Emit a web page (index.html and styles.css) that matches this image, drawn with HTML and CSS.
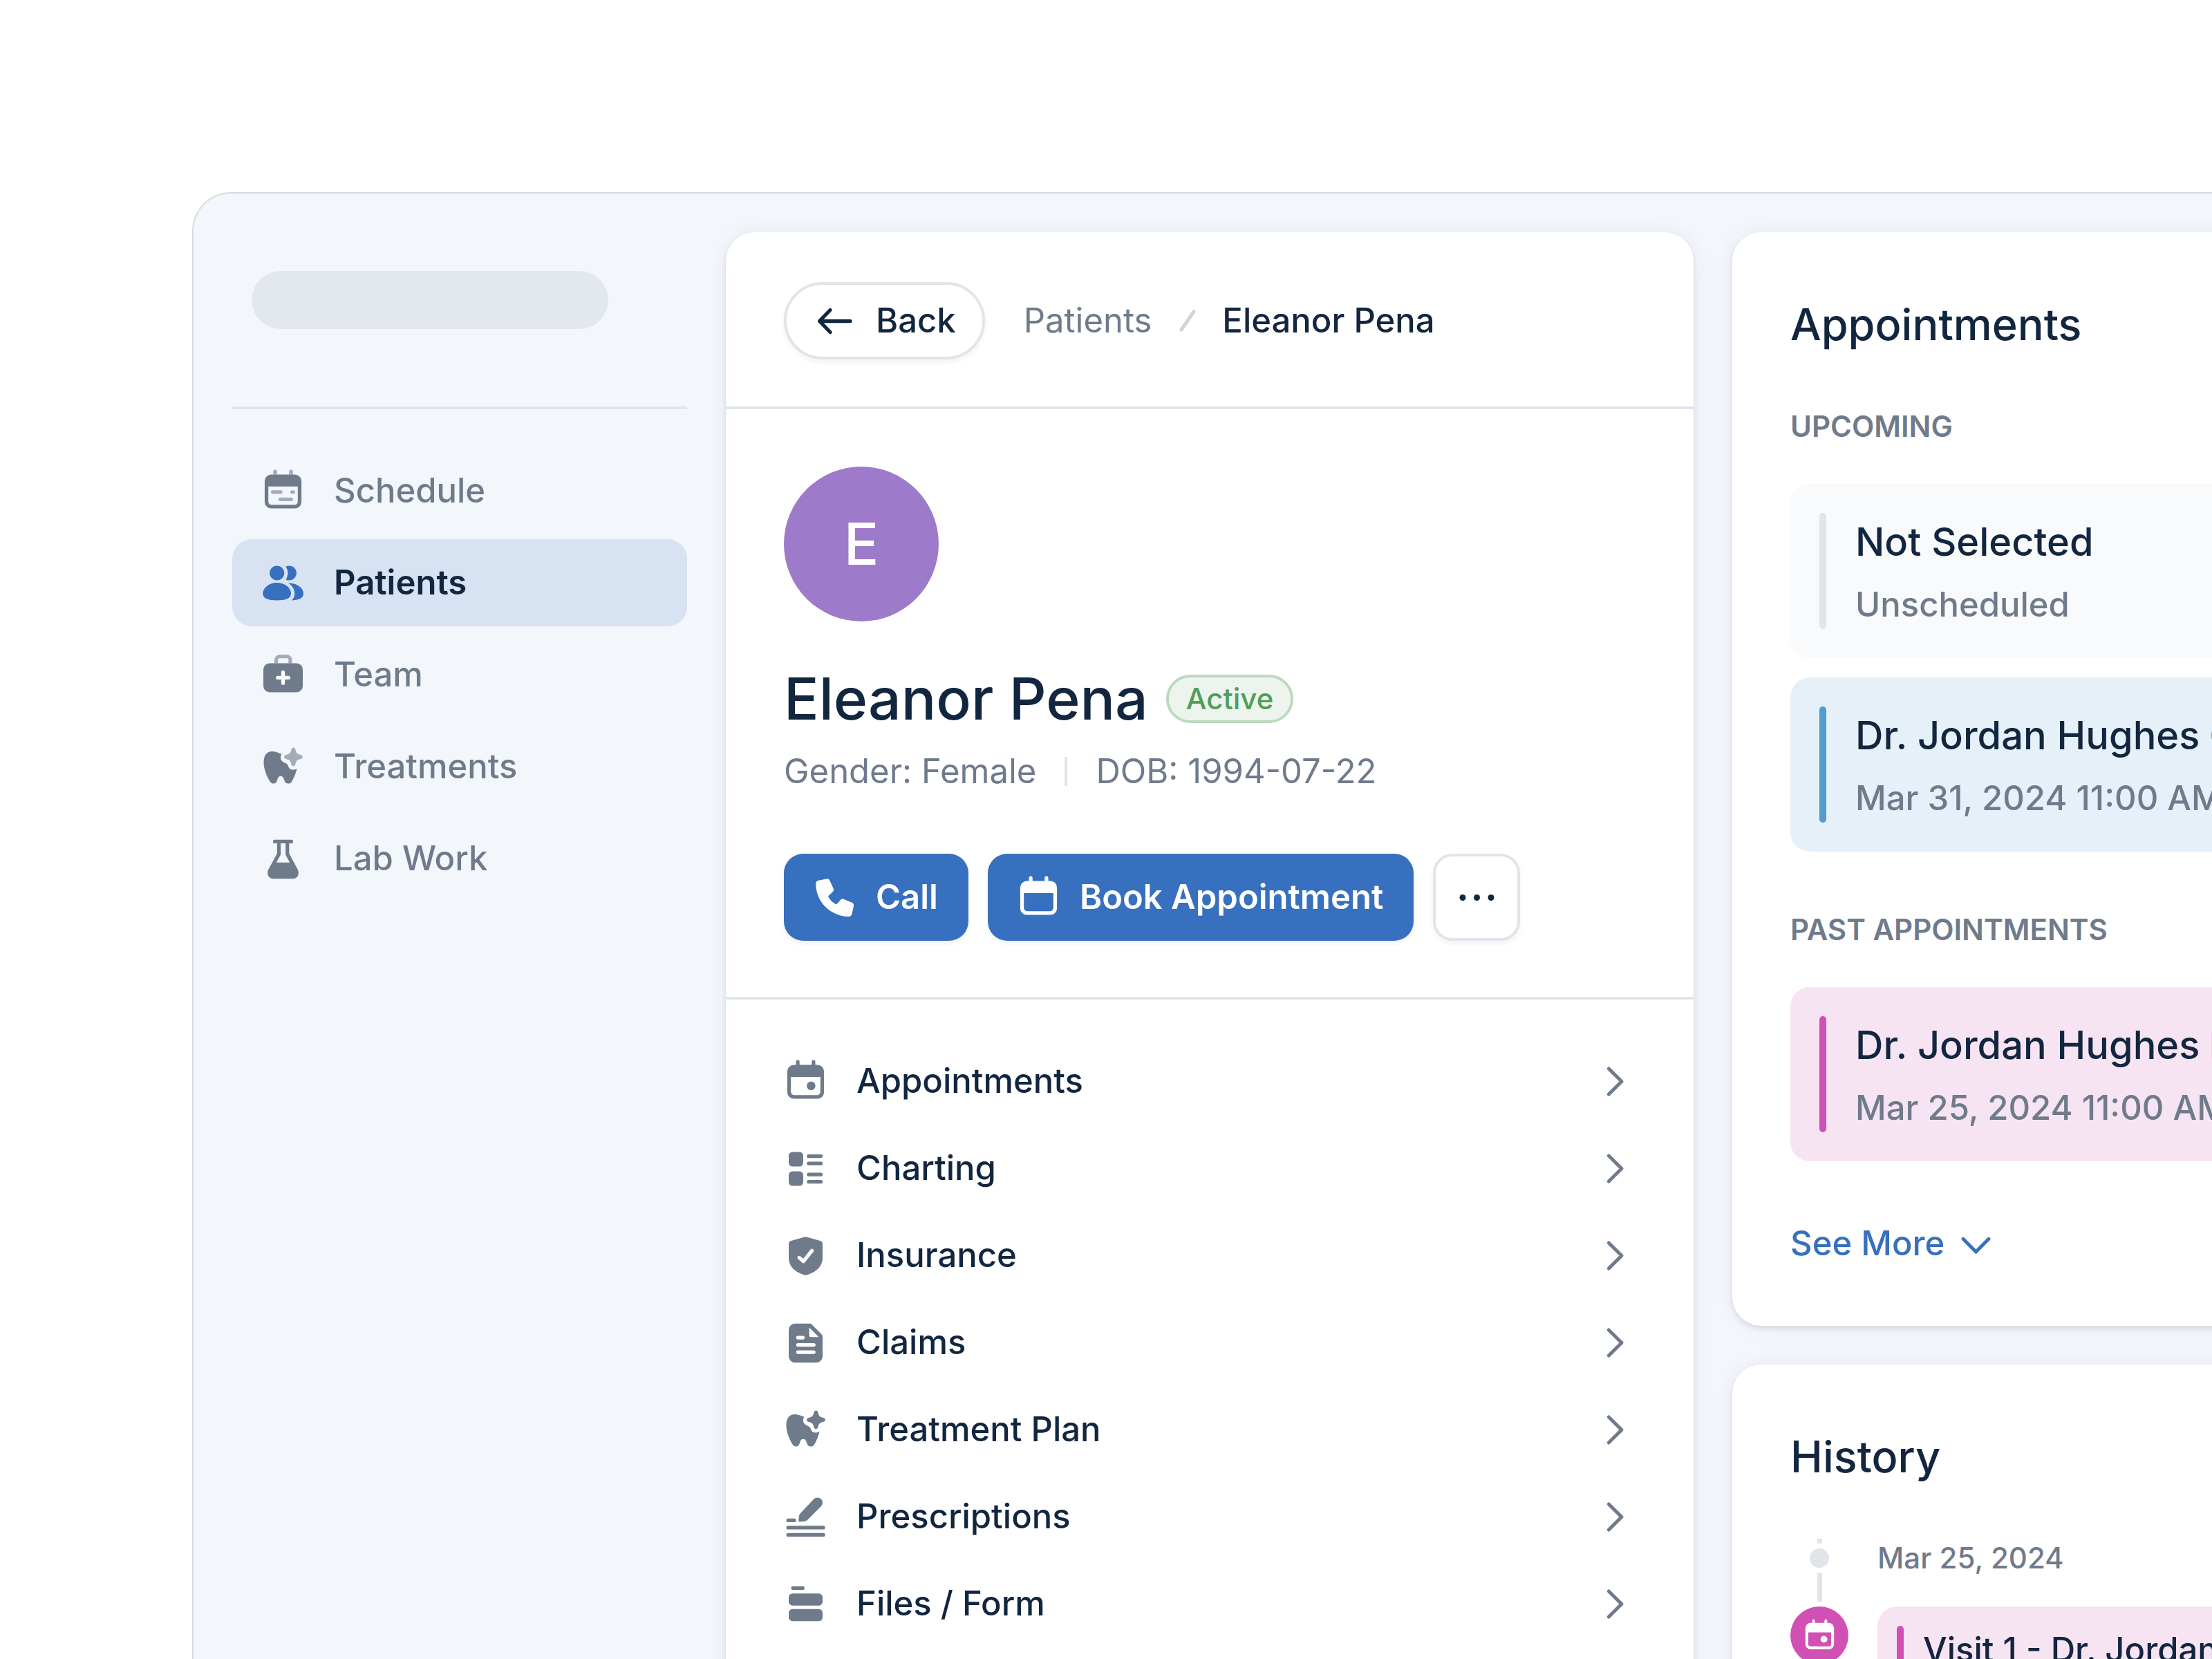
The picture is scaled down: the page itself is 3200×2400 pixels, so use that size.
FILE: index.html
```html
<!DOCTYPE html>
<html lang="en">
<head>
<meta charset="utf-8">
<title>Eleanor Pena – Patients</title>
<link rel="stylesheet" href="styles.css">
</head>
<body>
<svg class="sprite" aria-hidden="true">
  <symbol id="i-calendar" viewBox="0 0 63 63">
    <path d="M14.5 7.5h3V3.2a2.6 2.6 0 0 1 5.2 0v4.3h17.6V3.2a2.6 2.6 0 0 1 5.2 0v4.3h3a9.6 9.6 0 0 1 9.6 9.6v29.8a9.6 9.6 0 0 1-9.6 9.6h-34a9.6 9.6 0 0 1-9.6-9.6V17.100a9.600 9.600 0 0 1 9.600-9.600zM10.200 25v21.600a4.600 4.600 0 0 0 4.600 4.600h33.400a4.600 4.600 0 0 0 4.600-4.600V25z"/>
  </symbol>
  <symbol id="i-calendar-dot" viewBox="0 0 63 63">
    <use href="#i-calendar"/><circle cx="39.400" cy="37.800" r="6.300"/>
  </symbol>
  <symbol id="i-tooth" viewBox="0 0 63 63">
    <path d="M29.400 12.800C25 11.500 22 9 16 8.900C8 8.900 3.500 14.500 3.500 24.500C3.500 35 8 45 12.200 52C13.600 54.500 15.500 55.600 17.600 55.600C20 55.600 21.600 54.400 22.700 51.500C23.800 48 24.600 44.800 28 44.800C31.400 44.800 32.400 48 33.500 51.500C34.600 54.400 36.600 55.600 38.900 55.600C41.200 55.600 43 54.600 44.500 52C47.500 46.500 50 40.500 51.600 34C49.500 35.200 47.500 35.500 45.300 35.500C42.500 35.500 40.500 34 39.400 31.500C38.500 28.500 37.400 26.800 35 26C30.500 24.400 28 22 28 17.800C28 15.800 28.400 14.200 29.400 12.800z"/>
    <path class="soft" d="M46.400 3.600C48 3.600 49 5 49.400 6.500C50.700 11.500 51.800 12.800 56.800 14C58.600 14.400 59.800 15.500 59.800 17C59.800 18.500 58.600 19.600 56.800 20C51.800 21.200 50.700 22.600 49.400 27.300C49 29 48 30.400 46.400 30.400C44.800 30.400 43.900 29 43.400 27.300C42.100 22.600 41 21.200 36 20C34.200 19.600 33 18.500 33 17C33 15.500 34.200 14.400 36 14C41 12.800 42.100 11.500 43.400 6.500C43.900 5 44.800 3.600 46.400 3.600z"/>
  </symbol>
  <symbol id="i-next" viewBox="0 0 63 63">
    <path class="line" d="M24.300 13L43 31.500L24.300 50"/>
  </symbol>
</svg>

<div class="app">
  <aside class="sidebar">
    <div class="brand"><div class="brand-placeholder"></div></div>
    <nav class="nav" aria-label="Main">
      <a class="nav-item" href="#schedule">
        <svg class="icon" viewBox="0 0 63 63" aria-hidden="true">
          <path class="soft" d="M17.200 7.500V3.200a2.800 2.800 0 0 1 5.600 0v4.300zM40.200 7.500V3.200a2.800 2.800 0 0 1 5.600 0v4.300z"/>
          <path d="M14.500 7.400h34a9.600 9.600 0 0 1 9.600 9.600v30a9.600 9.600 0 0 1-9.600 9.600h-34a9.600 9.600 0 0 1-9.600-9.600v-30a9.600 9.600 0 0 1 9.600-9.600zM10.200 24.700v22a4.600 4.600 0 0 0 4.600 4.600h33.400a4.600 4.600 0 0 0 4.600-4.600v-22z"/>
          <path class="soft-line" d="M16.600 32.800h11.500M44.600 32.800h1.800M27.400 43.300h16"/>
        </svg>
        <span>Schedule</span>
      </a>
      <a class="nav-item is-active" href="#patients" aria-current="page">
        <svg class="icon" viewBox="0 0 63 63" aria-hidden="true">
          <circle cx="22.700" cy="17" r="10.600"/>
          <path d="M22.700 31C34 31 43 38.500 43 46.600C43 54 35 56.600 22.700 56.600C10 56.600 2.200 54 2.200 46.600C2.200 38.500 11.500 31 22.700 31z"/>
          <path d="M35.400 7.400C37 6.700 38.700 6.400 40.400 6.400A10.600 10.600 0 0 1 40.400 27.600C38.700 27.600 37.100 27.200 35.600 26.400A17 17 0 0 0 35.400 7.400z"/>
          <path d="M39.300 31.500C51.500 31.500 61 38.500 61 46.600C61 54 53.500 56.300 44 56.400C47 54 48.200 50.500 48.200 46.600C48.200 41 45 35.200 39.300 31.500z"/>
        </svg>
        <span>Patients</span>
      </a>
      <a class="nav-item" href="#team">
        <svg class="icon" viewBox="0 0 63 63" aria-hidden="true">
          <path class="soft" d="M19 14.500V10a8 8 0 0 1 8-8h9.500a8 8 0 0 1 8 8v4.500h-5.200V9a1.800 1.800 0 0 0-1.800-1.800H26a1.800 1.800 0 0 0-1.800 1.800v5.500z"/>
          <rect x="3" y="14.500" width="57" height="42" rx="9"/>
          <path class="cut" d="M23.700 35.400h15.600M31.500 27.600v15.600"/>
        </svg>
        <span>Team</span>
      </a>
      <a class="nav-item" href="#treatments">
        <svg class="icon two-tone" viewBox="0 0 63 63" aria-hidden="true"><use href="#i-tooth"/></svg>
        <span>Treatments</span>
      </a>
      <a class="nav-item" href="#lab">
        <svg class="icon" viewBox="0 0 63 63" aria-hidden="true">
          <path d="M19.500 3.800h24a2.600 2.600 0 0 1 0 5.200h-3.200v14.800L52.500 46.500C56 53.500 52.500 60.200 45.500 60.200H17.500C10.500 60.200 7 53.500 10.500 46.500L22.900 23.800V9h-3.400a2.600 2.600 0 0 1 0-5.200zM28 9v15.500a4 4 0 0 1-.6 2L21.800 36.800h19.400L35.600 26.500a4 4 0 0 1-.5-2V9z"/>
        </svg>
        <span>Lab Work</span>
      </a>
    </nav>
  </aside>

  <main class="card patient">
    <header class="patient-bar">
      <button class="back" type="button">
        <svg class="icon" viewBox="0 0 63 63" aria-hidden="true"><path class="bold-line" d="M54 31.500H10M25 15.500L9.500 31.500L25 47.500"/></svg>
        <span>Back</span>
      </button>
      <nav class="crumbs" aria-label="Breadcrumb">
        <a class="crumb" href="#patients">Patients</a>
        <svg class="slash" viewBox="0 0 46 46" aria-hidden="true"><path d="M15 36L33 10"/></svg>
        <span class="crumb is-current" aria-current="page">Eleanor Pena</span>
      </nav>
    </header>

    <section class="profile">
      <div class="avatar" aria-hidden="true">E</div>
      <div class="name-row">
        <h1 class="name">Eleanor Pena</h1>
        <span class="badge">Active</span>
      </div>
      <div class="meta">
        <span>Gender: Female</span>
        <span class="meta-rule"></span>
        <span>DOB: 1994-07-22</span>
      </div>
      <div class="actions">
        <button class="btn btn-primary" type="button">
          <svg class="icon" viewBox="0 0 63 63" aria-hidden="true"><path d="M19.500 4.500C21.600 4 23.600 5 24.400 7L29.800 18.800C30.400 20.300 30 22 28.700 23.200L22 29.500C24.500 35 28.500 39 34 41.500L40 34.800C41.200 33.400 43 33 44.600 33.700L56.500 38.800C58.500 39.600 59.400 41.600 59 43.700L56.500 55C56 57.400 54.200 59 51.800 59C25.500 58.500 4.500 38 4.200 11.500C4.200 9 5.700 7.200 8 6.700z"/></svg>
          <span>Call</span>
        </button>
        <button class="btn btn-primary" type="button">
          <svg class="icon" viewBox="0 0 63 63" aria-hidden="true"><use href="#i-calendar"/></svg>
          <span>Book Appointment</span>
        </button>
        <button class="btn btn-more" type="button" aria-label="More actions">
          <svg class="icon" viewBox="0 0 63 63" aria-hidden="true"><circle cx="11" cy="31.500" r="4.500"/><circle cx="31.500" cy="31.500" r="4.500"/><circle cx="52" cy="31.500" r="4.500"/></svg>
        </button>
      </div>
    </section>

    <nav class="menu" aria-label="Patient record">
      <a class="menu-item" href="#appointments">
        <svg class="icon" viewBox="0 0 63 63" aria-hidden="true"><use href="#i-calendar-dot"/></svg>
        <span class="menu-label">Appointments</span>
        <svg class="icon" viewBox="0 0 63 63" aria-hidden="true"><use href="#i-next"/></svg>
      </a>
      <a class="menu-item" href="#charting">
        <svg class="icon" viewBox="0 0 63 63" aria-hidden="true">
          <rect x="7" y="7.500" width="21" height="21" rx="5.500"/><rect x="7" y="35.500" width="21" height="21" rx="5.500"/>
          <path class="bar" d="M35.800 13.500h17.800M35.800 24h17.800M35.800 40h17.800M35.800 50.500h17.800"/>
        </svg>
        <span class="menu-label">Charting</span>
        <svg class="icon" viewBox="0 0 63 63" aria-hidden="true"><use href="#i-next"/></svg>
      </a>
      <a class="menu-item" href="#insurance">
        <svg class="icon" viewBox="0 0 63 63" aria-hidden="true">
          <path d="M30 4.400a4.500 4.500 0 0 1 3 0L52.500 10C54.800 10.700 56 12.300 56 14.500V34C56 48 46 55.500 33 59.500a5 5 0 0 1-3 0C17 55.500 7 48 7 34V14.500C7 12.300 8.200 10.700 10.500 10z"/>
          <path class="cut" d="M22.300 34.500L28.300 39.700L40.600 24.300"/>
        </svg>
        <span class="menu-label">Insurance</span>
        <svg class="icon" viewBox="0 0 63 63" aria-hidden="true"><use href="#i-next"/></svg>
      </a>
      <a class="menu-item" href="#claims">
        <svg class="icon" viewBox="0 0 63 63" aria-hidden="true">
          <path d="M16 3.800H37.200a4.500 4.500 0 0 1 3.200 1.300L54.700 19.400A4.500 4.500 0 0 1 56 22.600V51a9.200 9.200 0 0 1-9.200 9.200H16A9.200 9.200 0 0 1 7 51V13A9.200 9.200 0 0 1 16 3.800zM36.700 9.600V20.800a2.500 2.500 0 0 0 2.500 2.500H50.400z"/>
          <path class="cut" d="M20.400 24h7M20.400 34.500h22.800M20.400 45h22.800"/>
        </svg>
        <span class="menu-label">Claims</span>
        <svg class="icon" viewBox="0 0 63 63" aria-hidden="true"><use href="#i-next"/></svg>
      </a>
      <a class="menu-item" href="#treatment-plan">
        <svg class="icon" viewBox="0 0 63 63" aria-hidden="true"><use href="#i-tooth"/></svg>
        <span class="menu-label">Treatment Plan</span>
        <svg class="icon" viewBox="0 0 63 63" aria-hidden="true"><use href="#i-next"/></svg>
      </a>
      <a class="menu-item" href="#prescriptions">
        <svg class="icon" viewBox="0 0 63 63" aria-hidden="true">
          <path d="M23.600 26.500L43 6C47 2 52 3.500 54 5.800C56.500 8.600 56.800 13 53.600 16.300L34.500 35.500C33 37 31 37.700 29 37.900L23 38.400C21.600 38.500 21.200 37.800 21.200 36.800L21.900 30.500C22.100 29 22.600 27.600 23.600 26.500z"/>
          <path class="bar" d="M6.200 36.400h8.800M6.200 46.900h50.800M6.200 57.400h50.800"/>
        </svg>
        <span class="menu-label">Prescriptions</span>
        <svg class="icon" viewBox="0 0 63 63" aria-hidden="true"><use href="#i-next"/></svg>
      </a>
      <a class="menu-item" href="#files">
        <svg class="icon" viewBox="0 0 63 63" aria-hidden="true">
          <path class="bar" d="M13.200 8.400h14"/>
          <rect x="7" y="16.200" width="49" height="17.500" rx="5.500"/><rect x="7" y="38.700" width="49" height="17.500" rx="5.500"/>
        </svg>
        <span class="menu-label">Files / Form</span>
        <svg class="icon" viewBox="0 0 63 63" aria-hidden="true"><use href="#i-next"/></svg>
      </a>
    </nav>
  </main>

  <div class="rail">
    <section class="card panel">
      <h2 class="panel-title">Appointments</h2>
      <h3 class="label label-first">UPCOMING</h3>
      <div class="visits">
        <article class="visit visit-empty">
          <div class="visit-text"><p class="visit-title">Not Selected</p><p class="visit-sub">Unscheduled</p></div>
        </article>
        <article class="visit visit-blue">
          <div class="visit-text">
            <p class="visit-title">Dr. Jordan Hughes <span class="marker marker-round"></span></p>
            <p class="visit-sub">Mar 31, 2024 11:00 AM</p>
          </div>
        </article>
      </div>
      <h3 class="label">PAST APPOINTMENTS</h3>
      <div class="visits">
        <article class="visit visit-pink">
          <div class="visit-text">
            <p class="visit-title">Dr. Jordan Hughes <span class="marker marker-square"></span></p>
            <p class="visit-sub">Mar 25, 2024 11:00 AM</p>
          </div>
        </article>
      </div>
      <a class="see-more" href="#more">
        <span>See More</span>
        <svg class="icon" viewBox="0 0 63 63" aria-hidden="true"><path class="line" d="M13 24.300L31.500 43L50 24.300"/></svg>
      </a>
    </section>

    <section class="card panel">
      <h2 class="panel-title">History</h2>
      <ol class="timeline">
        <li class="event">
          <div class="track"><span class="tick"></span><span class="node"></span><span class="rule"></span></div>
          <time class="event-date" datetime="2024-03-25">Mar 25, 2024</time>
        </li>
        <li class="event">
          <div class="track"><span class="pin"><svg class="pin-icon" viewBox="0 0 63 63" aria-hidden="true"><use href="#i-calendar-dot"/></svg></span></div>
          <div class="note">Visit 1 - Dr. Jordan Hughes</div>
        </li>
      </ol>
    </section>
  </div>
</div>
</body>
</html>
```
FILE: styles.css
```css
:root {
  --ink: #12263f;
  --muted: #6f7b8b;
  --line: #e1e5ea;
  --canvas: #f3f6fb;
  --blue: #3770be;
}

* { box-sizing: border-box; }

html { background: #fff; overflow: hidden; }

body {
  margin: 0;
  padding: 278px 0 0 278px;
  height: 100vh;
  overflow: hidden;
  color: var(--ink);
  font-family: Inter, "Liberation Sans", sans-serif;
  font-size: 49px;
  line-height: 70px;
  font-weight: 500;
  white-space: nowrap;
}

h1, h2, h3, p, ol { margin: 0; padding: 0; font-weight: inherit; font-size: inherit; }
ol { list-style: none; }
a { color: inherit; text-decoration: none; }
button { font: inherit; color: inherit; cursor: pointer; }

.sprite { position: absolute; width: 0; height: 0; }
.icon { flex: none; width: 63px; height: 63px; fill: currentColor; fill-rule: evenodd; }
.line, .bold-line, .bar, .soft-line, .cut {
  fill: none;
  stroke: currentColor;
  stroke-width: 5.25px;
  stroke-linecap: round;
  stroke-linejoin: round;
}
.line { stroke-width: 5px; }
.cut { stroke: #fff; }
.two-tone { --tone: 0.6; }
.soft { opacity: var(--tone, 1); }
.nav-item .soft, .soft-line { opacity: 0.6; }

.app {
  display: flex;
  align-items: flex-start;
  gap: 56px;
  min-height: 100vh;
  padding: 56px;
  border: 2px solid #d9dbde;
  border-right: 0;
  border-radius: 56px 0 0 0;
  background: var(--canvas);
}

.card {
  border-radius: 42px;
  background: #fff;
  box-shadow: 0 4px 7px rgba(18, 38, 63, 0.1), 0 0 28px rgba(18, 38, 63, 0.06);
}

/* Sidebar */
.sidebar { flex: none; width: 658px; }
.brand { padding: 56px 28px 112px; border-bottom: 4px solid var(--line); }
.brand-placeholder { width: 516px; height: 84px; border-radius: 42px; background: #e3e8ef; }
.nav { display: flex; flex-direction: column; gap: 7px; padding-top: 55px; }
.nav-item {
  display: flex;
  align-items: center;
  gap: 42px;
  height: 126px;
  padding: 0 42px;
  border-radius: 28px;
  color: var(--muted);
}
.nav-item.is-active { background: #d7e3f3; color: var(--ink); font-weight: 600; }
.nav-item.is-active .icon { color: var(--blue); }

/* Patient column */
.patient { flex: none; width: 1400px; padding-bottom: 56px; }
.patient-bar {
  display: flex;
  align-items: center;
  gap: 56px;
  padding: 72px 84px 68px;
  border-bottom: 4px solid var(--line);
}
.back {
  display: flex;
  align-items: center;
  gap: 28px;
  height: 112px;
  padding: 0 38px;
  border: 4px solid var(--line);
  border-radius: 56px;
  background: #fff;
  box-shadow: 0 4px 7px rgba(18, 38, 63, 0.06);
}
.crumbs { display: flex; align-items: center; gap: 28px; }
.crumb { color: var(--muted); font-weight: 400; }
.crumb.is-current { color: var(--ink); font-weight: 500; }
.slash { width: 46px; height: 46px; fill: none; stroke: #cfd3d9; stroke-width: 5px; stroke-linecap: round; }

.profile { padding: 83px 84px 81px; border-bottom: 4px solid var(--line); }
.avatar {
  display: grid;
  place-items: center;
  width: 224px;
  height: 224px;
  border-radius: 50%;
  background: #9e7bca;
  color: #fff;
  font-size: 84px;
}
.name-row { display: flex; align-items: center; gap: 26px; margin-top: 56px; }
.name { font-size: 84px; line-height: 112px; }
.badge {
  height: 70px;
  padding: 0 25px;
  border: 4px solid #badbbd;
  border-radius: 35px;
  background: #edf4ee;
  color: #4f9f58;
  font-size: 42px;
  line-height: 62px;
}
.meta { display: flex; align-items: center; gap: 41px; margin-top: 14px; color: var(--muted); font-weight: 400; }
.meta-rule { width: 4px; height: 42px; background: var(--line); }
.actions { display: flex; gap: 28px; margin-top: 84px; }
.btn {
  display: flex;
  align-items: center;
  justify-content: center;
  gap: 28px;
  height: 126px;
  padding: 0 44px 0 42px;
  border: 0;
  border-radius: 28px;
  box-shadow: 0 4px 7px rgba(18, 38, 63, 0.06);
}
.btn-primary { background: var(--blue); color: #fff; font-weight: 600; }
.btn-more { width: 126px; padding: 0; border: 4px solid var(--line); background: #fff; }

.menu { padding: 55px 84px; }
.menu-item { display: flex; align-items: center; gap: 42px; height: 126px; }
.menu-item .icon { color: var(--muted); }
.menu-label { flex: 1; }

/* Right rail */
.rail { display: flex; flex: 1 0 1400px; flex-direction: column; gap: 56px; }
.panel { padding: 84px; }
.panel-title { font-size: 63px; line-height: 98px; }
.label { margin: 85px 0 55px; color: var(--muted); font-size: 42px; line-height: 56px; font-weight: 600; }
.label-first { margin-top: 71px; }
.visits { display: flex; flex-direction: column; gap: 28px; }
.visit { display: flex; gap: 42px; padding: 42px; border-radius: 28px; }
.visit::before { content: ""; width: 10px; border-radius: 5px; background: var(--accent); }
.visit-empty { --accent: #e1e4e9; background: #f8fafc; }
.visit-blue { --accent: #549bcf; background: #e5f0f9; }
.visit-pink { --accent: #d051b3; background: #f7e4f3; }
.visit-title { display: flex; align-items: center; gap: 17px; font-size: 56px; line-height: 84px; }
.visit-sub { margin-top: 14px; color: var(--muted); }
.marker { width: 42px; height: 42px; }
.marker-round { border-radius: 50%; background: #549bcf; }
.marker-square { border-radius: 4px; background: #f3cdea; }
.see-more { display: inline-flex; align-items: center; gap: 14px; height: 70px; margin-top: 84px; color: var(--blue); vertical-align: top; }

.timeline { margin-top: 70px; }
.event { display: flex; gap: 42px; }
.track { display: flex; flex: none; flex-direction: column; align-items: center; gap: 7px; width: 84px; }
.tick, .rule { width: 7px; height: 7px; background: var(--line); }
.rule { height: 42px; margin-bottom: 7px; }
.node { width: 28px; height: 28px; border-radius: 50%; background: var(--line); }
.event-date { color: var(--muted); font-size: 42px; line-height: 56px; }
.pin { display: grid; place-items: center; width: 84px; height: 84px; border-radius: 50%; background: #d051b3; color: #fff; }
.pin-icon { width: 49px; height: 49px; fill: currentColor; fill-rule: evenodd; }
.note { display: flex; flex: 1; gap: 28px; padding: 28px; border-radius: 28px; background: #f7e4f3; }
.note::before { content: ""; width: 10px; border-radius: 5px; background: #d051b3; }
```
